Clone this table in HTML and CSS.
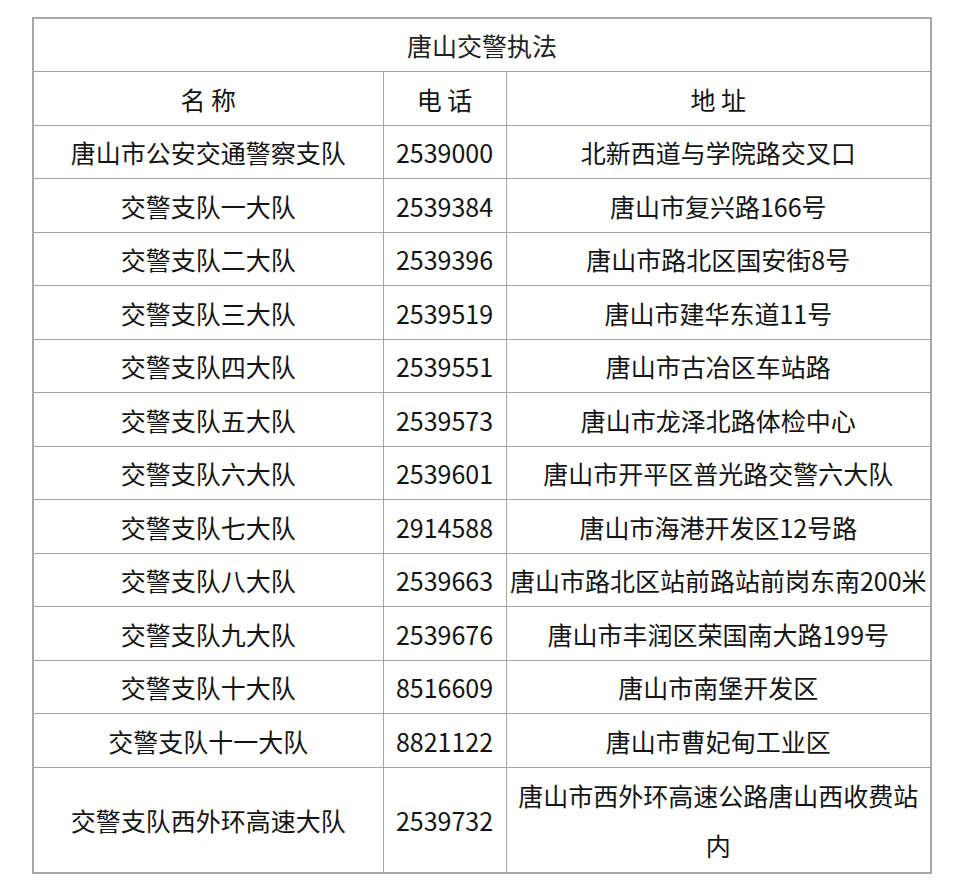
FILE: index.html
```html
<!DOCTYPE html>
<html lang="zh-CN">
<head>
<meta charset="utf-8">
<title>唐山交警执法</title>
<link rel="stylesheet" href="styles.css">
</head>
<body>
<div class="page">
<table class="grid">
  <colgroup>
    <col class="c-name">
    <col class="c-tel">
    <col class="c-addr">
  </colgroup>
  <tr class="r-title"><td colspan="3">唐山交警执法</td></tr>
  <tr class="r-head"><td>名 称</td><td>电 话</td><td>地 址</td></tr>
  <tr class="odd"><td>唐山市公安交通警察支队</td><td>2539000</td><td>北新西道与学院路交叉口</td></tr>
  <tr class="even"><td>交警支队一大队</td><td>2539384</td><td>唐山市复兴路166号</td></tr>
  <tr class="odd"><td>交警支队二大队</td><td>2539396</td><td>唐山市路北区国安街8号</td></tr>
  <tr class="even"><td>交警支队三大队</td><td>2539519</td><td>唐山市建华东道11号</td></tr>
  <tr class="odd"><td>交警支队四大队</td><td>2539551</td><td>唐山市古冶区车站路</td></tr>
  <tr class="even"><td>交警支队五大队</td><td>2539573</td><td>唐山市龙泽北路体检中心</td></tr>
  <tr class="odd"><td>交警支队六大队</td><td>2539601</td><td>唐山市开平区普光路交警六大队</td></tr>
  <tr class="even"><td>交警支队七大队</td><td>2914588</td><td>唐山市海港开发区12号路</td></tr>
  <tr class="odd"><td>交警支队八大队</td><td>2539663</td><td>唐山市路北区站前路站前岗东南200米</td></tr>
  <tr class="even"><td>交警支队九大队</td><td>2539676</td><td>唐山市丰润区荣国南大路199号</td></tr>
  <tr class="odd"><td>交警支队十大队</td><td>8516609</td><td>唐山市南堡开发区</td></tr>
  <tr class="even"><td>交警支队十一大队</td><td>8821122</td><td>唐山市曹妃甸工业区</td></tr>
  <tr class="r-last"><td>交警支队西外环高速大队</td><td>2539732</td><td class="two">唐山市西外环高速公路唐山西收费站<br>内</td></tr>
</table>
</div>
</body>
</html>
```

FILE: styles.css
```css
html, body {
  margin: 0;
  padding: 0;
  background: #ffffff;
}

.page {
  padding: 17px 0 0 32px;
}

.grid {
  border-collapse: collapse;
  table-layout: fixed;
  width: 898px;
  font-family: "Noto Sans CJK SC", "Noto Sans", sans-serif;
  font-size: 25px;
  color: #141414;
  border: 2px solid #a8a8a8;
}

.c-name { width: 350px; }
.c-tel { width: 123px; }
.c-addr { width: 425px; }

.grid td {
  border: 1px solid #a4a4a4;
  text-align: center;
  vertical-align: middle;
  padding: 0 2px;
  line-height: 30px;
  white-space: nowrap;
  overflow: hidden;
}

.grid .r-title td { height: 52px; color: #222222; }
.grid .r-head td { height: 53px; }
.grid .odd td { height: 52px; }
.grid .even td { height: 53px; }
.grid .r-last td { height: 104px; }

.grid td.two { line-height: 50px; }
```
